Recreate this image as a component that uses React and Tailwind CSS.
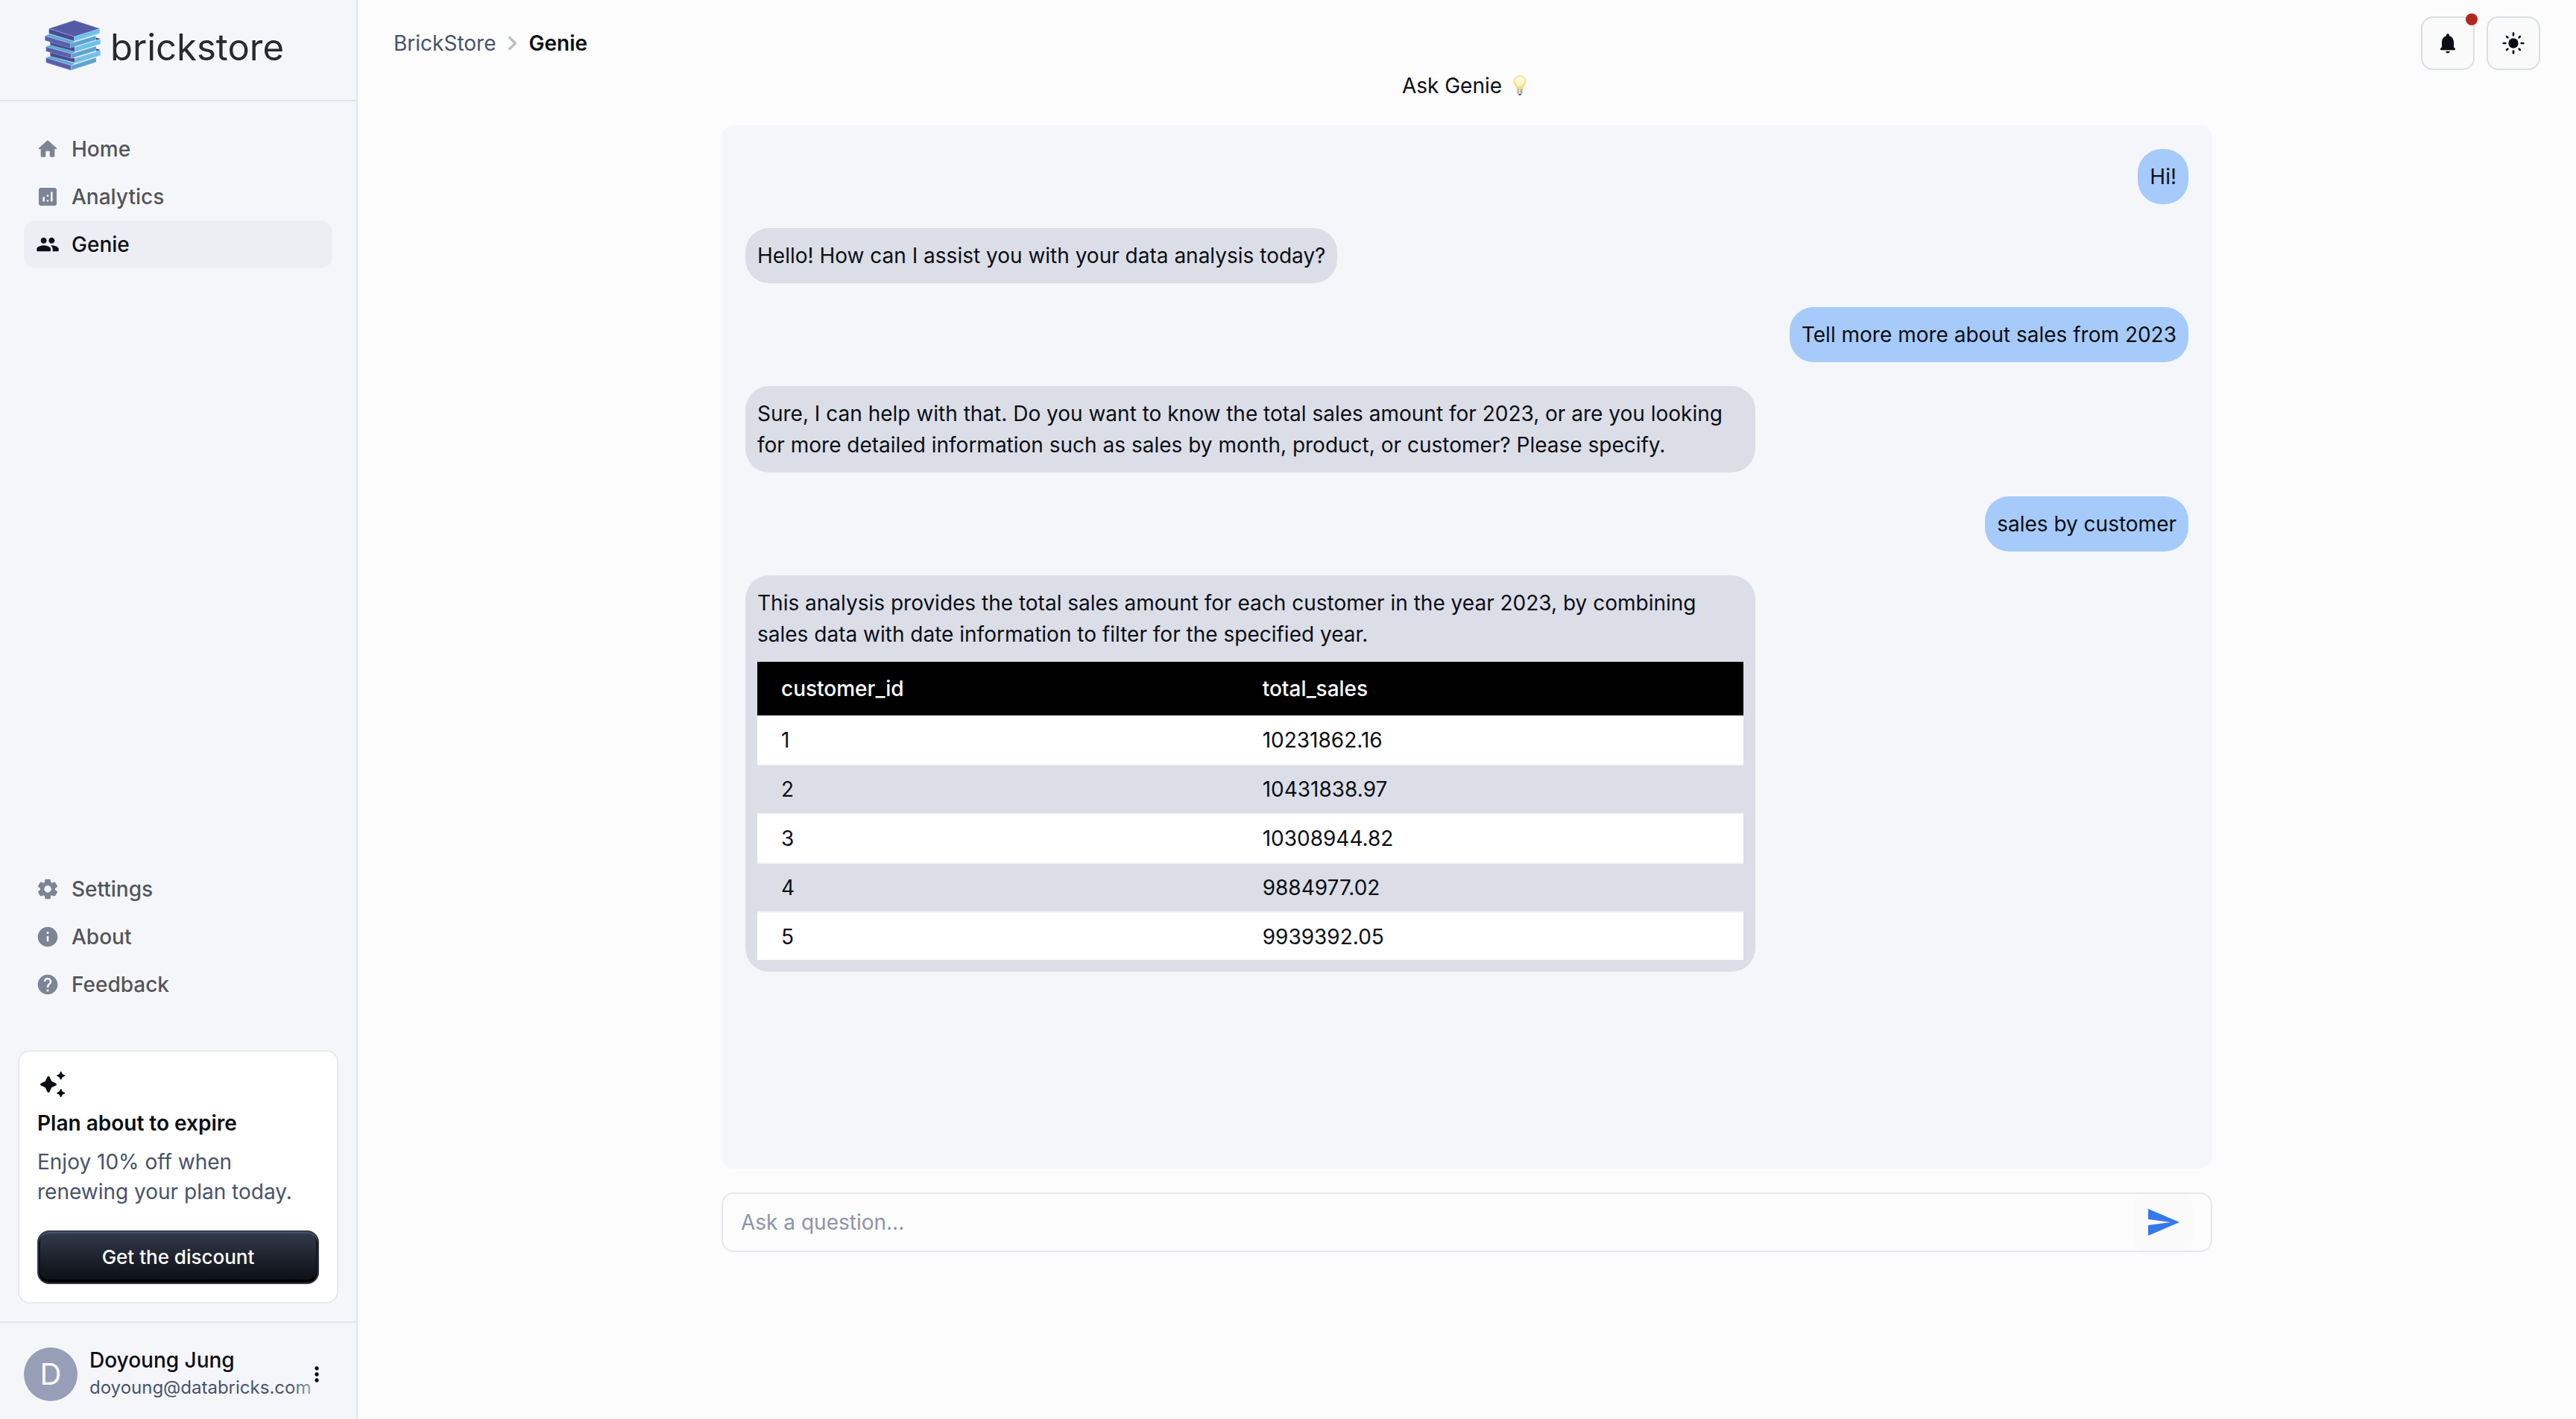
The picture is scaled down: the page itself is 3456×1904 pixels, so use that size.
const ICONS = {
  home: "M10 19v-5h4v5c0 .55.45 1 1 1h3c.55 0 1-.45 1-1v-7h1.7c.46 0 .68-.57.33-.87L12.67 3.6c-.38-.34-.96-.34-1.34 0l-8.36 7.53c-.34.3-.13.87.33.87H5v7c0 .55.45 1 1 1h3c.55 0 1-.45 1-1",
  analytics:
    "M19 3H5c-1.1 0-2 .9-2 2v14c0 1.1.9 2 2 2h14c1.1 0 2-.9 2-2V5c0-1.1-.9-2-2-2M8 17c-.55 0-1-.45-1-1v-3c0-.55.45-1 1-1s1 .45 1 1v3c0 .55-.45 1-1 1m4 0c-.55 0-1-.45-1-1s.45-1 1-1 1 .45 1 1-.45 1-1 1m0-5c-.55 0-1-.45-1-1s.45-1 1-1 1 .45 1 1-.45 1-1 1m4 5c-.55 0-1-.45-1-1V8c0-.55.45-1 1-1s1 .45 1 1v8c0 .55-.45 1-1 1",
  people:
    "M16 11c1.66 0 2.99-1.34 2.99-3S17.66 5 16 5s-3 1.34-3 3 1.34 3 3 3m-8 0c1.66 0 2.99-1.34 2.99-3S9.66 5 8 5 5 6.34 5 8s1.34 3 3 3m0 2c-2.33 0-7 1.17-7 3.5V18c0 .55.45 1 1 1h12c.55 0 1-.45 1-1v-1.5c0-2.33-4.67-3.5-7-3.5m8 0c-.29 0-.62.02-.97.05.02.01.03.03.04.04 1.14.83 1.93 1.94 1.93 3.41V18c0 .35-.07.69-.18 1H22c.55 0 1-.45 1-1v-1.5c0-2.33-4.67-3.5-7-3.5",
  settings:
    "M19.5 12c0-.23-.01-.45-.03-.68l1.86-1.41c.4-.3.51-.86.26-1.3l-1.87-3.23c-.25-.44-.79-.62-1.25-.42l-2.15.91c-.37-.26-.76-.49-1.17-.68l-.29-2.31c-.06-.5-.49-.88-.99-.88h-3.73c-.51 0-.94.38-1 .88l-.29 2.31c-.41.19-.8.42-1.17.68l-2.15-.91c-.46-.2-1-.02-1.25.42L2.41 8.62c-.25.44-.14.99.26 1.3l1.86 1.41c-.02.22-.03.44-.03.67s.01.45.03.68l-1.86 1.41c-.4.3-.51.86-.26 1.3l1.87 3.23c.25.44.79.62 1.25.42l2.15-.91c.37.26.76.49 1.17.68l.29 2.31c.06.5.49.88.99.88h3.73c.5 0 .93-.38.99-.88l.29-2.31c.41-.19.8-.42 1.17-.68l2.15.91c.46.2 1 .02 1.25-.42l1.87-3.23c.25-.44.14-.99-.26-1.3l-1.86-1.41c.03-.23.04-.45.04-.68m-7.46 3.5c-1.93 0-3.5-1.57-3.5-3.5s1.57-3.5 3.5-3.5 3.5 1.57 3.5 3.5-1.57 3.5-3.5 3.5",
  info: "M12 2C6.48 2 2 6.48 2 12s4.48 10 10 10 10-4.48 10-10S17.52 2 12 2m0 15c-.55 0-1-.45-1-1v-4c0-.55.45-1 1-1s1 .45 1 1v4c0 .55-.45 1-1 1m1-8h-2V7h2z",
  help: "M12 2C6.48 2 2 6.48 2 12s4.48 10 10 10 10-4.48 10-10S17.52 2 12 2m1 17h-2v-2h2zm2.07-7.75-.9.92c-.5.51-.86.97-1.04 1.69-.08.32-.13.68-.13 1.14h-2v-.5c0-.46.08-.9.22-1.31.2-.58.53-1.1.95-1.52l1.24-1.26c.46-.44.68-1.1.55-1.8-.13-.72-.69-1.33-1.39-1.53-1.11-.31-2.14.32-2.47 1.27-.12.37-.43.65-.82.65h-.3C8.4 9 8 8.44 8.16 7.88c.43-1.47 1.68-2.59 3.23-2.83 1.52-.24 2.97.55 3.87 1.8 1.18 1.63.83 3.38-.19 4.4",
  sparkle:
    "m19.46 8 .79-1.75L22 5.46c.39-.18.39-.73 0-.91l-1.75-.79L19.46 2c-.18-.39-.73-.39-.91 0l-.79 1.75-1.76.79c-.39.18-.39.73 0 .91l1.75.79.79 1.76c.18.39.74.39.92 0M11.5 9.5 9.91 6c-.35-.78-1.47-.78-1.82 0L6.5 9.5 3 11.09c-.78.36-.78 1.47 0 1.82l3.5 1.59L8.09 18c.36.78 1.47.78 1.82 0l1.59-3.5 3.5-1.59c.78-.36.78-1.47 0-1.82zm7.04 6.5-.79 1.75-1.75.79c-.39.18-.39.73 0 .91l1.75.79.79 1.76c.18.39.73.39.91 0l.79-1.75 1.76-.79c.39-.18.39-.73 0-.91l-1.75-.79-.79-1.76c-.18-.39-.74-.39-.92 0",
  bell: "M12 22c1.1 0 2-.9 2-2h-4c0 1.1.89 2 2 2m6-6v-5c0-3.07-1.64-5.64-4.5-6.32V4c0-.83-.67-1.5-1.5-1.5s-1.5.67-1.5 1.5v.68C7.63 5.36 6 7.92 6 11v5l-1.29 1.29c-.63.63-.19 1.71.7 1.71h13.17c.89 0 1.34-1.08.71-1.71z",
  next: "M9.31 6.71c-.39.39-.39 1.02 0 1.41L13.19 12l-3.88 3.88c-.39.39-.39 1.02 0 1.41s1.02.39 1.41 0l4.59-4.59c.39-.39.39-1.02 0-1.41L10.72 6.7c-.38-.38-1.02-.38-1.41.01",
  more: "M12 8c1.1 0 2-.9 2-2s-.9-2-2-2-2 .9-2 2 .9 2 2 2m0 2c-1.1 0-2 .9-2 2s.9 2 2 2 2-.9 2-2-.9-2-2-2m0 6c-1.1 0-2 .9-2 2s.9 2 2 2 2-.9 2-2-.9-2-2-2",
  send: "M2.01 21 23 12 2.01 3 2 10l15 2-15 2z",
};

function Icon({ name, className }) {
  return (
    <svg viewBox="0 0 24 24" fill="currentColor" aria-hidden="true" className={className}>
      <path d={ICONS[name]} />
    </svg>
  );
}

function SunIcon({ className }) {
  return (
    <svg viewBox="0 0 24 24" fill="none" stroke="currentColor" strokeWidth="2" strokeLinecap="round" aria-hidden="true" className={className}>
      <circle cx="12" cy="12" r="5" fill="currentColor" stroke="none" />
      <path d="M12 2v2M12 20v2M2 12h2M20 12h2M5.3 5.3l1 1M17.7 17.7l1 1M5.3 18.7l1-1M17.7 6.3l1-1" />
    </svg>
  );
}

function BulbIcon() {
  return (
    <svg viewBox="0 0 20 30" aria-hidden="true" className="h-[30px] w-8">
      <defs>
        <radialGradient id="bulbGlow" cx="0.5" cy="0.3" r="0.7">
          <stop offset="0" stopColor="#fffef4" />
          <stop offset="0.5" stopColor="#fcf1b8" />
          <stop offset="1" stopColor="#ebcb74" />
        </radialGradient>
        <linearGradient id="bulbBase">
          <stop offset="0" stopColor="#9a9a9a" />
          <stop offset="0.45" stopColor="#e2e2e2" />
          <stop offset="1" stopColor="#8c8c8c" />
        </linearGradient>
      </defs>
      <path d="M10 1.5c4.6 0 8 3.2 8 7.4 0 3.8-2.7 5.3-3.7 8.7-.4 1.5-.6 3-1 3H6.7c-.4 0-.6-1.5-1-3C4.7 14.2 2 12.7 2 8.900c0-4.2 3.4-7.400 8-7.400z" fill="url(#bulbGlow)" stroke="#e8cf7a" strokeWidth="0.8" />
      <path d="M6.6 20h6.8v4.4c0 1-.8 1.8-1.8 1.8H8.400c-1 0-1.800-.8-1.800-1.800z" fill="url(#bulbBase)" />
      <path d="M8 26.200h4l-1 1.800H9z" fill="#3d3d3d" />
    </svg>
  );
}

function LogoMark() {
  return (
    <svg viewBox="178 78 231 210" aria-hidden="true" className="h-[70px] w-[77px]">
      <g stroke="#b9dcf2" strokeWidth="1" strokeLinejoin="round">
        <path d="M186 232 205 226 302 255 288 264z" fill="#62a8d4" />
        <path d="M186 232 288 264 286 283 186 252z" fill="#5a5fa9" />
        <path d="M288 264 388 232V250L286 283z" fill="#5fa3d0" />
        <path d="M202 210 302 235V252L204 226z" fill="#454c93" stroke="none" />
        <path d="M386 195 405 201 390 207z" fill="#454c93" stroke="none" />
        <path d="M302 235 405 203V223L302 255z" fill="#6fc2e8" />
        <path d="M186 188 205 180 304 209 288 217z" fill="#62a8d4" />
        <path d="M186 188 288 217V235L186 206z" fill="#5a5fa9" />
        <path d="M288 217 388 186V204L288 235z" fill="#5fa3d0" />
        <path d="M202 168 302 190V208L204 181z" fill="#454c93" stroke="none" />
        <path d="M384 151 405 156 388 162z" fill="#454c93" stroke="none" />
        <path d="M302 190 405 158V177L302 209z" fill="#6fc2e8" />
        <path d="M182 145 200 137 302 167 284 175z" fill="#62a8d4" />
        <path d="M182 145 284 175V193L182 163z" fill="#5a5fa9" />
        <path d="M284 175 386 144V161L284 193z" fill="#5fa3d0" />
        <path d="M198 115 300 147V166L198 135z" fill="#454c93" />
        <path d="M300 147 402 115V134L300 166z" fill="#6fc2e8" />
        <path d="M198 115 300 82 402 115 300 147z" fill="#545aa5" />
      </g>
    </svg>
  );
}

function NavItem({ icon, label, active }) {
  return (
    <li>
      <a
        href="#"
        aria-current={active ? "page" : undefined}
        className={
          active
            ? "flex h-16 items-center gap-4 rounded-2xl bg-[#edeef3] px-4 font-medium text-[#0b0e14]"
            : "flex h-16 items-center gap-4 rounded-2xl px-4 font-medium text-[#535559]"
        }
      >
        <Icon name={icon} className={active ? "size-8" : "size-8 text-[#7c8596]"} />
        {label}
      </a>
    </li>
  );
}

function Sidebar() {
  return (
    <aside className="flex w-[480px] shrink-0 flex-col border-r-2 border-[#e2e4ec] bg-[#f5f6fa]">
      <div className="flex h-[136px] items-start gap-3 border-b-2 border-[#e2e4ec] pt-[26px] pl-[59px]">
        <LogoMark />
        <span className="text-[49px] leading-[76px] text-[#2a2a2a]">brickstore</span>
      </div>
      <nav className="flex flex-1 flex-col justify-between p-8 pb-14">
        <ul>
          <NavItem icon="home" label="Home" />
          <NavItem icon="analytics" label="Analytics" />
          <NavItem icon="people" label="Genie" active />
        </ul>
        <ul>
          <NavItem icon="settings" label="Settings" />
          <NavItem icon="info" label="About" />
          <NavItem icon="help" label="Feedback" />
        </ul>
      </nav>
      <section className="m-6 mt-0 rounded-2xl border-2 border-[#e7e8ee] bg-white p-6">
        <Icon name="sparkle" className="size-10" />
        <h2 className="mt-3 leading-10 font-semibold">Plan about to expire</h2>
        <p className="mt-3 mb-8 leading-10 text-[#47536b]">Enjoy 10% off when renewing your plan today.</p>
        <button
          type="button"
          className="h-[72px] w-full rounded-2xl border-2 border-[#333a4b] bg-linear-to-b from-[#333a4b] to-[#0b0e14] text-[26px] font-medium text-white shadow-[inset_0_2px_0_#47536b,inset_0_-4px_0_#000,inset_2px_0_0_#10131a,inset_-2px_0_0_#10131a]"
        >
          Get the discount
        </button>
      </section>
      <footer className="flex items-center border-t-2 border-[#e2e4ec] px-8 pt-[30px] pb-[21px]">
        <div className="flex size-[72px] shrink-0 items-center justify-center rounded-full bg-[#979fb8] text-[40px] text-[#fcfcfc]">D</div>
        <div className="ml-4 min-w-0 pb-1">
          <p className="leading-10 font-medium">Doyoung Jung</p>
          <p className="text-2xl leading-[34px] text-[#47536b]">doyoung@databricks.com</p>
        </div>
        <button
          type="button"
          aria-label="Account menu"
          className="relative -mr-4 -ml-7 flex size-[72px] shrink-0 items-center justify-center bg-linear-to-r from-transparent to-[#f5f6fa] to-80%"
        >
          <Icon name="more" className="size-8" />
        </button>
      </footer>
    </aside>
  );
}

function IconButton({ label, children }) {
  return (
    <button
      type="button"
      aria-label={label}
      className="relative flex size-[72px] items-center justify-center rounded-2xl border-2 border-[#dadee7] bg-[#fafafa]"
    >
      {children}
    </button>
  );
}

function Header() {
  return (
    <header className="flex items-start justify-between px-12 pt-[22px]">
      <nav aria-label="Breadcrumb" className="flex h-[72px] items-center">
        <a href="#" className="text-[#47536b]">BrickStore</a>
        <Icon name="next" className="mx-0.5 size-10 text-[#bcbcbe]" />
        <span aria-current="page" className="font-semibold">Genie</span>
      </nav>
      <div className="flex gap-4">
        <IconButton label="Notifications">
          <Icon name="bell" className="size-8" />
          <span className="absolute -top-[6px] -right-[6px] size-4 rounded-full bg-[#b3261e]" />
        </IconButton>
        <IconButton label="Toggle theme">
          <SunIcon className="size-8" />
        </IconButton>
      </div>
    </header>
  );
}

const SALES = [
  ["1", "10231862.16"],
  ["2", "10431838.97"],
  ["3", "10308944.82"],
  ["4", "9884977.02"],
  ["5", "9939392.05"],
];

function SalesTable() {
  return (
    <table className="mt-4 w-full border-collapse text-left">
      <thead>
        <tr className="h-[72px] bg-black text-white">
          <th className="px-8 font-medium">customer_id</th>
          <th className="px-8 font-medium">total_sales</th>
        </tr>
      </thead>
      <tbody>
        {SALES.map(([id, total]) => (
          <tr key={id} className="h-[66px] border-b-2 border-[#f5f6fa] odd:bg-white last:h-16 last:border-b-0">
            <td className="px-8">{id}</td>
            <td className="px-8">{total}</td>
          </tr>
        ))}
      </tbody>
    </table>
  );
}

function Message({ from, children }) {
  return (
    <li
      className={
        from === "user"
          ? "max-w-[70%] self-end rounded-[32px] bg-[#a6cbfa] p-4"
          : "max-w-[70%] self-start rounded-[32px] bg-[#dbdee7] p-4"
      }
    >
      {children}
    </li>
  );
}

export default function App() {
  return (
    <div className="flex min-h-screen bg-[#fcfcfc] font-['Inter',sans-serif] text-[28px] leading-[42px] text-[#0b0e14]">
      <Sidebar />
      <div className="flex min-w-0 flex-1 flex-col">
        <Header />
        <main className="mx-auto flex w-full max-w-[2000px] flex-col">
          <h1 className="flex items-center justify-center gap-2 pb-8">
            Ask Genie
            <BulbIcon />
          </h1>
          <ul className="flex min-h-[1400px] flex-col gap-8 rounded-2xl bg-[#f5f6fa] p-8">
            <Message from="user">Hi!</Message>
            <Message from="genie">Hello! How can I assist you with your data analysis today?</Message>
            <Message from="user">Tell more more about sales from 2023</Message>
            <Message from="genie">
              Sure, I can help with that. Do you want to know the total sales amount for 2023, or are you looking for more
              detailed information such as sales by month, product, or customer? Please specify.
            </Message>
            <Message from="user">sales by customer</Message>
            <Message from="genie">
              This analysis provides the total sales amount for each customer in the year 2023, by combining sales data with
              date information to filter for the specified year.
              <SalesTable />
            </Message>
          </ul>
          <form className="mt-8 flex h-20 items-stretch rounded-2xl border-2 border-[#e7e7ed] pr-6">
            <input
              type="text"
              aria-label="Ask a question"
              placeholder="Ask a question..."
              className="min-w-0 flex-1 bg-transparent px-6 outline-none placeholder:text-[#8d95a8]"
            />
            <button type="button" aria-label="Send" className="flex w-20 items-center justify-center rounded-2xl bg-[#fafafa] text-[#3578ea]">
              <Icon name="send" className="size-12" />
            </button>
          </form>
        </main>
      </div>
    </div>
  );
}
